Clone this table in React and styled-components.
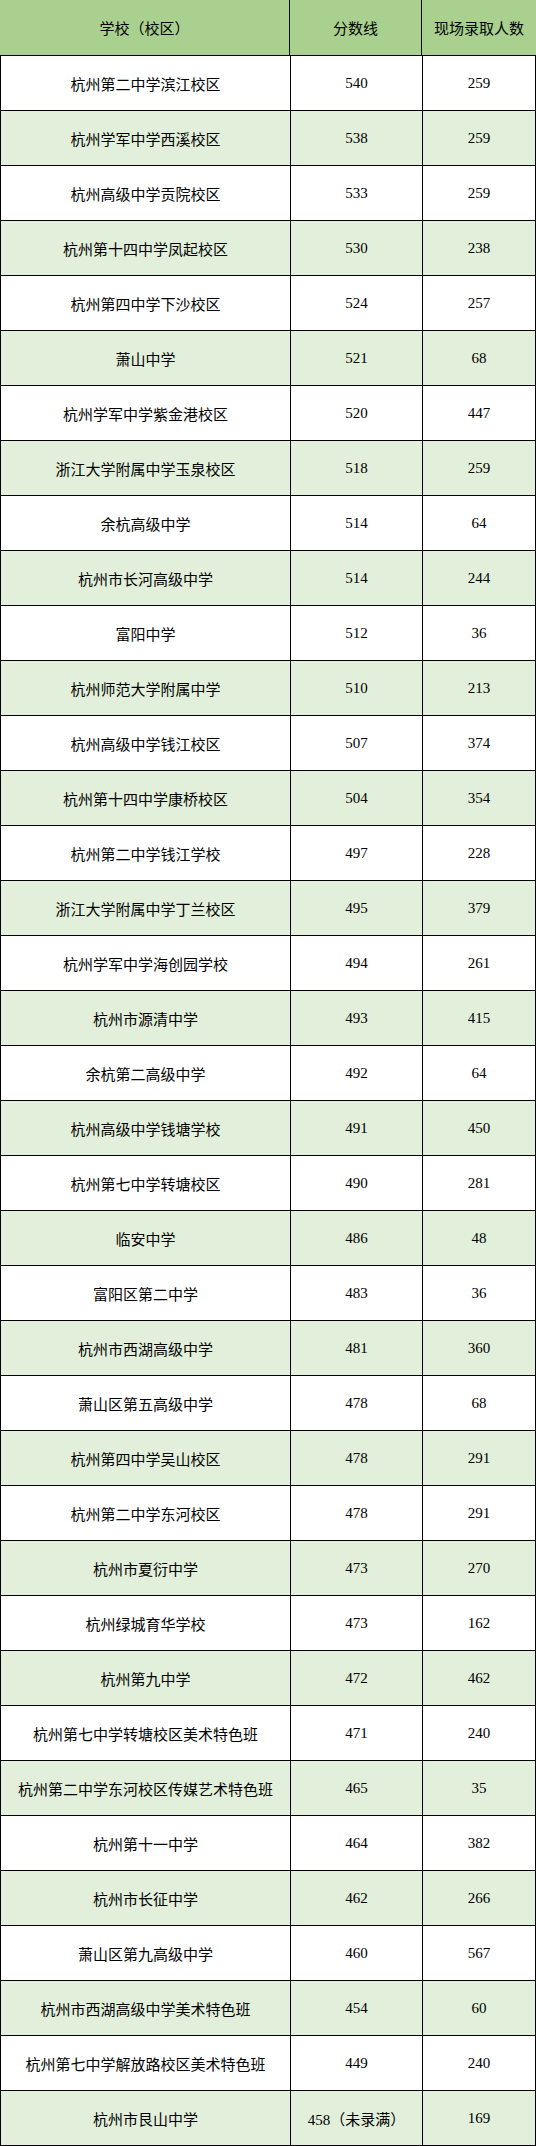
import React from "react";
import styled, { createGlobalStyle } from "styled-components";

const Global = createGlobalStyle`
  html, body { margin: 0; padding: 0; background: #fff; }
  body { font-family: "Liberation Serif", "Noto Sans CJK SC", serif; }
`;

const rows = [
  ["杭州第二中学滨江校区", "540", "259"],
  ["杭州学军中学西溪校区", "538", "259"],
  ["杭州高级中学贡院校区", "533", "259"],
  ["杭州第十四中学凤起校区", "530", "238"],
  ["杭州第四中学下沙校区", "524", "257"],
  ["萧山中学", "521", "68"],
  ["杭州学军中学紫金港校区", "520", "447"],
  ["浙江大学附属中学玉泉校区", "518", "259"],
  ["余杭高级中学", "514", "64"],
  ["杭州市长河高级中学", "514", "244"],
  ["富阳中学", "512", "36"],
  ["杭州师范大学附属中学", "510", "213"],
  ["杭州高级中学钱江校区", "507", "374"],
  ["杭州第十四中学康桥校区", "504", "354"],
  ["杭州第二中学钱江学校", "497", "228"],
  ["浙江大学附属中学丁兰校区", "495", "379"],
  ["杭州学军中学海创园学校", "494", "261"],
  ["杭州市源清中学", "493", "415"],
  ["余杭第二高级中学", "492", "64"],
  ["杭州高级中学钱塘学校", "491", "450"],
  ["杭州第七中学转塘校区", "490", "281"],
  ["临安中学", "486", "48"],
  ["富阳区第二中学", "483", "36"],
  ["杭州市西湖高级中学", "481", "360"],
  ["萧山区第五高级中学", "478", "68"],
  ["杭州第四中学吴山校区", "478", "291"],
  ["杭州第二中学东河校区", "478", "291"],
  ["杭州市夏衍中学", "473", "270"],
  ["杭州绿城育华学校", "473", "162"],
  ["杭州第九中学", "472", "462"],
  ["杭州第七中学转塘校区美术特色班", "471", "240"],
  ["杭州第二中学东河校区传媒艺术特色班", "465", "35"],
  ["杭州第十一中学", "464", "382"],
  ["杭州市长征中学", "462", "266"],
  ["萧山区第九高级中学", "460", "567"],
  ["杭州市西湖高级中学美术特色班", "454", "60"],
  ["杭州第七中学解放路校区美术特色班", "449", "240"],
  ["杭州市艮山中学", "458（未录满）", "169"],
];

const Table = styled.div`
  width: 536px;
  display: flex;
  flex-direction: column;
`;

const HeaderRow = styled.div`
  display: grid;
  grid-template-columns: 290px 132px 1fr;
  height: 56px;
  box-sizing: border-box;
  background: #a9d08e;
  border-bottom: 1px solid #000;
`;

const HeaderCell = styled.div`
  display: flex;
  align-items: center;
  justify-content: center;
  font-size: 15px;
  color: #000;
  border-right: ${(p) => (p.$last ? "none" : "1px solid #000")};
`;

const Row = styled.div`
  display: grid;
  grid-template-columns: 290px 132px 1fr;
  height: 55px;
  box-sizing: border-box;
  background: ${(p) => (p.$alt ? "#e2efda" : "#ffffff")};
  border-left: 1px solid #000;
  border-bottom: 1px solid #000;
  margin-left: 0;
`;

const Cell = styled.div`
  display: flex;
  align-items: center;
  justify-content: center;
  font-size: 15px;
  color: #000;
  border-right: 1px solid #000;
  white-space: nowrap;
  ${(p) => (p.$first ? "margin-left: -1px;" : "")}
`;

export default function App() {
  return (
    <>
      <Global />
      <Table>
        <HeaderRow>
          <HeaderCell>学校（校区）</HeaderCell>
          <HeaderCell>分数线</HeaderCell>
          <HeaderCell $last>现场录取人数</HeaderCell>
        </HeaderRow>
        {rows.map((r, i) => (
          <Row key={i} $alt={i % 2 === 1}>
            <Cell>{r[0]}</Cell>
            <Cell>{r[1]}</Cell>
            <Cell>{r[2]}</Cell>
          </Row>
        ))}
      </Table>
    </>
  );
}
